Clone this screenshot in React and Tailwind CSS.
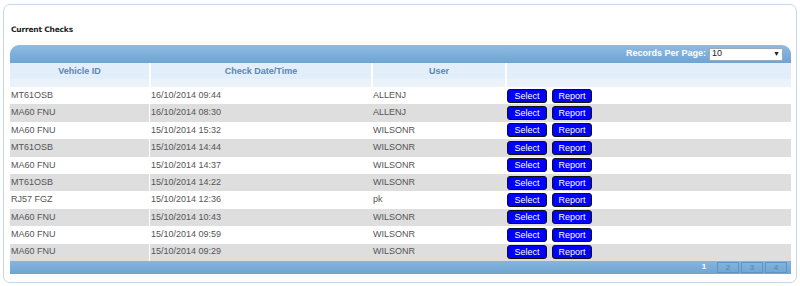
import React from 'react';

const rows = [
  ['MT61OSB', '16/10/2014 09:44', 'ALLENJ'],
  ['MA60 FNU', '16/10/2014 08:30', 'ALLENJ'],
  ['MA60 FNU', '15/10/2014 15:32', 'WILSONR'],
  ['MT61OSB', '15/10/2014 14:44', 'WILSONR'],
  ['MA60 FNU', '15/10/2014 14:37', 'WILSONR'],
  ['MT61OSB', '15/10/2014 14:22', 'WILSONR'],
  ['RJ57 FGZ', '15/10/2014 12:36', 'pk'],
  ['MA60 FNU', '15/10/2014 10:43', 'WILSONR'],
  ['MA60 FNU', '15/10/2014 09:59', 'WILSONR'],
  ['MA60 FNU', '15/10/2014 09:29', 'WILSONR'],
];

function Btn({ children }) {
  return (
    <span className="w-[40px] h-[14px] rounded-[3px] border border-[#111] bg-[#0000ff] text-white text-[9px] leading-[12px] text-center">
      {children}
    </span>
  );
}

export default function App() {
  return (
    <div className="w-[800px] h-[286px] bg-white pt-[4px] pl-[3px] font-['Liberation_Sans',Arial,sans-serif]">
      <div className="w-[794px] h-[279px] border border-[#c6d6ea] rounded-[7px] pt-[19px] px-[6px]">
        <div className="text-[7.5px] font-bold text-[#222] pl-[1px] h-[21px] font-['DejaVu_Sans',sans-serif] tracking-[-0.2px]">
          Current Checks
        </div>

        {/* Top bar */}
        <div className="w-[781px] h-[18px] rounded-t-[9px] bg-gradient-to-b from-[#8fbbe0] to-[#6fa4d2] flex items-center justify-end pr-[8px] gap-[3px]">
          <span className="text-[9px] font-bold text-white">Records Per Page:</span>
          <div className="w-[74px] h-[13px] bg-white border border-[#9ab] flex items-center justify-between px-[2px] text-[9px] text-[#222]">
            <span>10</span>
            <span className="text-[7px]">▼</span>
          </div>
        </div>

        {/* Header */}
        <div className="w-[781px] bg-[#e4eff9] grid grid-cols-[141px_222px_134px_284px]">
          {['Vehicle ID', 'Check Date/Time', 'User', ''].map((h, i) => (
            <div key={i} className={`h-[24px] ${i < 3 ? 'border-r-2 border-white' : ''}`}>
              <div className="h-[16px] bg-[#e2eef9] text-[9px] font-bold text-[#5a86b3] text-center leading-[17px]">{h}</div>
              <div className="h-[8px] bg-[#eaf3fc]"></div>
            </div>
          ))}
        </div>

        {/* Rows */}
        <div className="w-[781px]">
          {rows.map((r, i) => (
            <div
              key={i}
              className={`h-[17.4px] grid grid-cols-[140px_222px_134px_285px] items-center text-[9px] text-[#555] ${i % 2 ? 'bg-[#dedede]' : 'bg-white'}`}
            >
              <div className="pl-[1px] border-r border-white h-full flex items-center">{r[0]}</div>
              <div className="pl-[1px] h-full flex items-center">{r[1]}</div>
              <div className="pl-[1px] h-full flex items-center">{r[2]}</div>
              <div className="flex gap-[5px] pl-[1px] items-center">
                <Btn>Select</Btn>
                <Btn>Report</Btn>
              </div>
            </div>
          ))}
        </div>

        {/* Footer */}
        <div className="w-[781px] h-[13px] bg-gradient-to-b from-[#86b5dd] to-[#6fa4d2] flex items-center justify-end pr-[2px] text-[8px] font-bold">
          <span className="text-white w-[14px] text-center mr-[6px]">1</span>
          {['2', '3', '4'].map((p) => (
            <span key={p} className="w-[22px] h-[11px] border border-[#5d95c6] text-[#5d8fbd] text-center leading-[9px] mr-[2px]">{p}</span>
          ))}
        </div>
      </div>
    </div>
  );
}
